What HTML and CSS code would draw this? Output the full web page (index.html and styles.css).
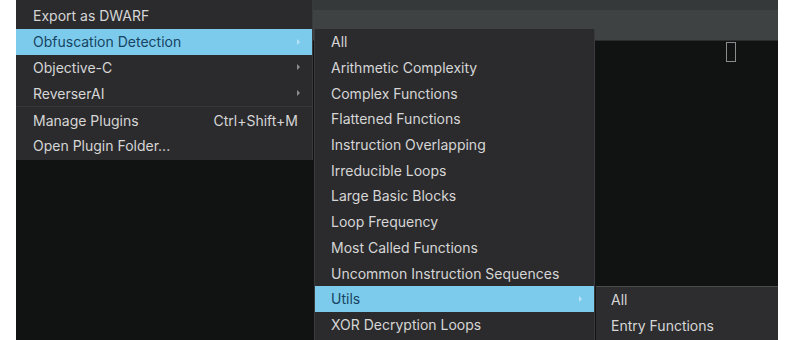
FILE: index.html
```html
<!DOCTYPE html>
<html lang="en">
<head>
  <meta charset="UTF-8" />
  <title>Plugins menu</title>
  <link rel="stylesheet" href="styles.css">
</head>
<body>

  <div class="app">
    <div class="toolbar"></div>
    <div class="tabbar"></div>
    <div class="editor">
      <span class="glyph-box"></span>
    </div>

    <!-- Plugins menu -->
    <div class="menu menu-main">
      <div class="item">Export as DWARF</div>
      <div class="item active has-sub">Obfuscation Detection</div>
      <div class="item has-sub">Objective-C</div>
      <div class="item has-sub">ReverserAI</div>
      <div class="sep"></div>
      <div class="item"><span>Manage Plugins</span><span class="shortcut">Ctrl+Shift+M</span></div>
      <div class="item">Open Plugin Folder...</div>
    </div>

    <!-- Obfuscation Detection submenu -->
    <div class="menu menu-sub">
      <div class="item">All</div>
      <div class="item">Arithmetic Complexity</div>
      <div class="item">Complex Functions</div>
      <div class="item">Flattened Functions</div>
      <div class="item">Instruction Overlapping</div>
      <div class="item">Irreducible Loops</div>
      <div class="item">Large Basic Blocks</div>
      <div class="item">Loop Frequency</div>
      <div class="item">Most Called Functions</div>
      <div class="item">Uncommon Instruction Sequences</div>
      <div class="item active has-sub">Utils</div>
      <div class="item">XOR Decryption Loops</div>
    </div>

    <!-- Utils submenu -->
    <div class="menu menu-utils">
      <div class="item">All</div>
      <div class="item">Entry Functions</div>
    </div>
  </div>

</body>
</html>
```

FILE: styles.css
```css
body {
  margin: 0;
  background: #ffffff;
  font-family: Inter, "Noto Sans", sans-serif;
  font-size: 14px;
}

.app {
  position: relative;
  margin-left: 16px;
  width: 762px;
  height: 340px;
  background: #111313;
  display: flex;
  flex-direction: column;
  overflow: hidden;
}

.toolbar {
  height: 10px;
  background: #353939;
}

.tabbar {
  height: 30px;
  background: #3e4242;
  border-bottom: 1px solid #2a2d2d;
}

.editor {
  flex: 1;
  position: relative;
  background: #111313;
}

.glyph-box {
  position: absolute;
  left: 710px;
  top: 1px;
  width: 8px;
  height: 18px;
  border: 1px solid #8a8d8d;
}

/* Menus */
.menu {
  position: absolute;
  background: #2b2b2d;
  color: #d6d6d6;
  box-sizing: border-box;
}

.menu-main {
  left: 0;
  top: 0;
  width: 297px;
  padding-top: 3px;
  padding-bottom: 1px;
  border-right: 1px solid #3a3a3c;
}

.menu-sub {
  left: 298px;
  top: 29px;
  width: 281px;
  height: 320px;
  border-left: 1px solid #3a3a3c;
  border-right: 1px solid #3a3a3c;
}

.menu-utils {
  left: 580px;
  top: 286px;
  width: 182px;
  height: 60px;
  background: #2d2d2f;
  border-top: 1px solid #4c4c4e;
}

.item {
  height: 25.8px;
  display: flex;
  align-items: center;
  justify-content: space-between;
  padding: 0 14px 0 17px;
  position: relative;
  white-space: nowrap;
}

.menu-sub .item {
  height: 25.7px;
  padding-left: 16px;
}

.menu-utils .item {
  height: 26px;
  padding-left: 15px;
}

.menu-utils .item:first-child {
  height: 25px;
}

.item.active {
  background: #7dcbec;
  color: #164462;
}

.has-sub::after {
  content: "";
  border-left: 3px solid #8d8d8f;
  border-top: 3px solid transparent;
  border-bottom: 3px solid transparent;
  margin-right: -2px;
}

.item.active.has-sub::after {
  border-left-color: #b8e4f6;
}

.shortcut {
  color: #d6d6d6;
}

.sep {
  height: 1px;
  background: #363638;
}
```
